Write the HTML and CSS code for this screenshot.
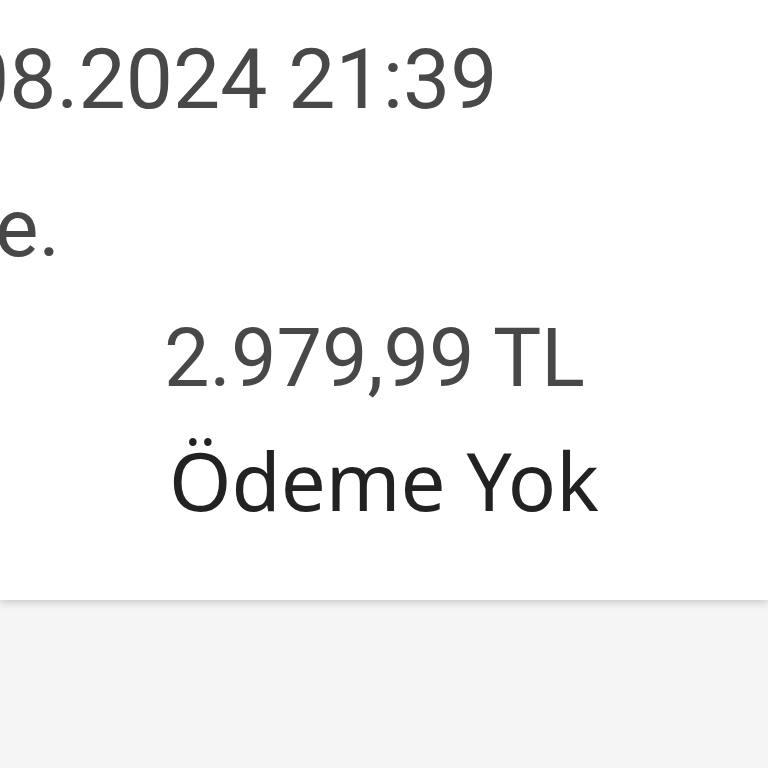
FILE: index.html
```html
<!DOCTYPE html>
<html lang="tr">
<head>
<meta charset="utf-8">
<link rel="stylesheet" href="styles.css">
</head>
<body>
<div class="card">
  <div class="date">08.2024 21:39</div>
  <div class="desc">e.</div>
  <div class="details">
    <div class="amount">2.979,99 TL</div>
    <div class="status">Ödeme Yok</div>
  </div>
</div>
<div class="rest"></div>
</body>
</html>
```
FILE: styles.css
```css
html, body {
  margin: 0;
  padding: 0;
  background: #f5f5f5;
  overflow: hidden;
}
body {
  width: 768px;
  height: 768px;
  font-family: Roboto, "Noto Sans", sans-serif;
}
.card {
  background: #ffffff;
  height: 600px;
  box-sizing: border-box;
  padding-top: 32px;
  box-shadow: 0 2px 8px rgba(0, 0, 0, 0.2);
  position: relative;
  overflow: hidden;
}
.date, .desc, .amount, .status {
  line-height: 96px;
  white-space: nowrap;
}
.date {
  font-size: 84px;
  color: #484848;
  margin-left: -38px;
}
.desc {
  font-size: 82px;
  color: #484848;
  margin-top: 52px;
  margin-left: -5px;
}
.details {
  margin-top: 35px;
  padding-left: 164px;
  display: flex;
  flex-direction: column;
  gap: 25px;
}
.amount {
  font-size: 81px;
  color: #484848;
}
.status {
  font-family: "Noto Sans", Roboto, sans-serif;
  font-size: 80px;
  color: #222222;
  margin-left: 5px;
}
```
